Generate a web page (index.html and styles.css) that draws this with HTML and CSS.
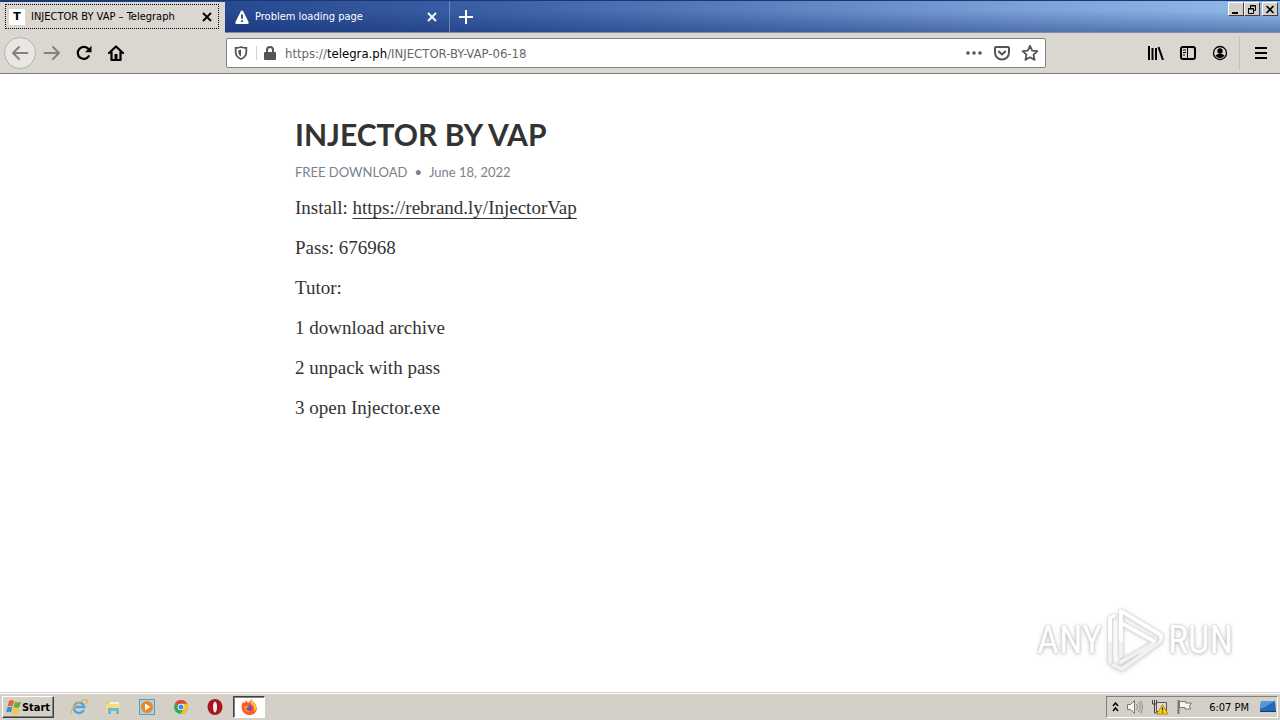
FILE: index.html
```html
<!DOCTYPE html>
<html lang="en">
<head>
    <meta charset="UTF-8">
    <meta name="viewport" content="width=device-width, initial-scale=1.0">
    <title>INJECTOR BY VAP – Telegraph</title>
    <link rel="stylesheet" href="styles.css">
</head>
<body>
    <header class="tab-strip">
        <div class="tab active">
            <div class="tab-focus">
                <span class="favicon">T</span>
                <span class="tab-label">INJECTOR BY VAP – Telegraph</span>
                <button class="tab-close" aria-label="Close tab">
                    <svg width="10" height="10" viewBox="0 0 10 10"><path d="M1 1l8 8M9 1L1 9" stroke="currentColor" stroke-width="1.8"/></svg>
                </button>
            </div>
        </div>
        <div class="tab">
            <svg class="warning" width="14" height="14" viewBox="0 0 14 14"><path d="M7 0.5Q7.7.5 8.1 1.2L13.6 12Q14 14 12.6 14H1.4Q0 14 .4 12L5.9 1.2Q6.3.5 7 .5z" fill="#fff"/><path d="M7 4.5v4.2M7 10.3v1.8" stroke="#234389" stroke-width="1.8"/></svg>
            <span class="tab-label">Problem loading page</span>
            <button class="tab-close" aria-label="Close tab">
                <svg width="10" height="10" viewBox="0 0 10 10"><path d="M1 1l8 8M9 1L1 9" stroke="currentColor" stroke-width="1.8"/></svg>
            </button>
        </div>
        <button class="new-tab" aria-label="New tab">
            <svg width="14" height="14" viewBox="0 0 14 14"><path d="M7 0v14M0 7h14" stroke="#fff" stroke-width="2"/></svg>
        </button>
        <div class="window-controls">
            <button class="win-button" aria-label="Minimize"><svg width="10" height="9" viewBox="0 0 10 9"><path d="M1 7h6v2H1z"/></svg></button>
            <button class="win-button" aria-label="Restore"><svg width="10" height="9" viewBox="0 0 10 9"><path d="M3.5 3V.5h5v5H7M3 1h6M1.500 3.500h5v5h-5zM1 4h6" fill="none" stroke="#000"/></svg></button>
            <button class="win-button close" aria-label="Close"><svg width="10" height="9" viewBox="0 0 10 9"><path d="M1.500 1l7 7M8.500 1l-7 7" stroke="#000" stroke-width="1.600"/></svg></button>
        </div>
    </header>

    <nav class="toolbar">
        <div class="nav-group">
            <button class="tool back" aria-label="Back"><svg width="18" height="16" viewBox="0 0 18 16"><path d="M16.500 8H2M8 2L2 8l6 6" fill="none" stroke="#85827e" stroke-width="2" stroke-linecap="round" stroke-linejoin="round"/></svg></button>
            <button class="tool" aria-label="Forward"><svg width="18" height="16" viewBox="0 0 18 16"><path d="M1.500 8H16M10 2l6 6-6 6" fill="none" stroke="#85827e" stroke-width="2" stroke-linecap="round" stroke-linejoin="round"/></svg></button>
            <button class="tool" aria-label="Reload"><svg width="16" height="16" viewBox="0 0 16 16"><path d="M12.800 11.200A6 6 0 1 1 12 3.600" fill="none" stroke="#000" stroke-width="2.200" stroke-linecap="round"/><path d="M15.500.8v6.400H9z"/></svg></button>
            <button class="tool" aria-label="Home"><svg width="16" height="16" viewBox="0 0 16 16"><path d="M1 8l7-6.500L15 8M3.500 7v8h9V7" fill="none" stroke="#000" stroke-width="2.200" stroke-linecap="round" stroke-linejoin="round"/><path d="M6.500 9h3v5h-3z"/></svg></button>
        </div>
        <div class="spacer"></div>
        <div class="url-bar">
            <svg class="shield" width="14" height="14" viewBox="0 0 14 14"><path d="M7 1Q4 2 1.700 2v4.500Q2 11 7 13q5-2 5.300-6.500V2Q10 2 7 1z" fill="none" stroke="#555" stroke-width="1.800"/><path d="M7 3.500v7Q4.500 9 4.300 6.500V4.200Q6 4 7 3.500z" fill="#555"/></svg>
            <svg class="lock" width="12" height="14" viewBox="0 0 12 14"><path d="M3 7V4a3 3 0 0 1 6 0v3" fill="none" stroke="#555" stroke-width="2"/><rect y="6" width="12" height="8" rx="1" fill="#555"/></svg>
            <a class="address" href="#">https://<span class="domain">telegra.ph</span>/INJECTOR-BY-VAP-06-18</a>
            <button class="url-action" aria-label="Page actions"><svg width="16" height="16" viewBox="0 0 16 16" fill="#555"><circle cx="2" cy="8" r="1.800"/><circle cx="8" cy="8" r="1.800"/><circle cx="14" cy="8" r="1.800"/></svg></button>
            <button class="url-action" aria-label="Save to Pocket"><svg width="16" height="16" viewBox="0 0 16 16" fill="none" stroke="#555" stroke-width="2" stroke-linecap="round" stroke-linejoin="round"><path d="M2 2h12q1 0 1 1v4.500a7 7 0 0 1-14 0V3q0-1 1-1z"/><path d="M4.800 6.500L8 9.500l3.200-3"/></svg></button>
            <button class="url-action" aria-label="Bookmark"><svg width="18" height="18" viewBox="0 0 18 18"><path d="M9 1.800l2.200 4.800 5.200.6-3.900 3.500 1.100 5.200L9 13.300l-4.600 2.600 1.100-5.200-3.900-3.500 5.200-.6z" fill="none" stroke="#555" stroke-width="1.800" stroke-linejoin="round"/></svg></button>
        </div>
        <div class="spacer"></div>
        <div class="nav-group">
            <button class="tool" aria-label="Library"><svg width="16" height="14" viewBox="0 0 16 14"><path d="M1 0v14M4.500 2v12M8 2v12M10.500 1l4.500 13" stroke="#000" stroke-width="2"/></svg></button>
            <button class="tool" aria-label="Sidebars"><svg width="16" height="14" viewBox="0 0 16 14"><rect x="1" y="1" width="14" height="12" rx="2" fill="none" stroke="#000" stroke-width="2"/><path d="M7.500 1v12M3 4h3M3 6.500h3M3 9h2" stroke="#000"/></svg></button>
            <button class="tool" aria-label="Account"><svg width="16" height="16" viewBox="0 0 16 16"><circle cx="8" cy="8" r="6.500" fill="none" stroke="#000" stroke-width="1.300"/><circle cx="8" cy="6" r="2.700"/><path d="M3.500 10.500Q5 8.700 8 8.700t4.500 1.800Q11 13 8 13t-4.500-2.500z"/></svg></button>
        </div>
        <button class="menu" aria-label="Open menu"><svg width="12" height="12" viewBox="0 0 12 12"><path d="M0 1h12M0 6h12M0 11h12" stroke="#000" stroke-width="2"/></svg></button>
    </nav>

    <main class="page">
        <article class="article">
            <h1>INJECTOR BY VAP</h1>
            <address class="byline">FREE DOWNLOAD<span class="dot">•</span><time datetime="2022-06-18">June 18, 2022</time></address>
            <p>Install: <a href="https://rebrand.ly/InjectorVap">https://rebrand.ly/InjectorVap</a></p>
            <p>Pass: 676968</p>
            <p>Tutor:</p>
            <p>1 download archive</p>
            <p>2 unpack with pass</p>
            <p>3 open Injector.exe</p>
        </article>
        <div class="watermark">
            <span>ANY</span>
            <svg width="58" height="64" viewBox="0 0 58 64" fill="none" stroke-width="4" stroke-linejoin="round" stroke-linecap="round">
                <path d="M4 32v22M15 32v16M7 57l9 4 39-28M15 54l31-18" stroke="#f1f1f1"/>
                <path d="M8 8L4 10v22M15 32V3l40 24v3M17 16l31 17" stroke="#fff"/>
            </svg>
            <span>RUN</span>
        </div>
    </main>

    <footer class="taskbar">
        <button class="start">
            <svg width="16" height="16" viewBox="0 0 16 16"><path d="M3 2q3-2 5 0L6.500 7.500Q4 6 1.500 7.500z" fill="#e9622b"/><path d="M9 2.500q3 2 6 0L13.500 8q-3 2-6 0z" fill="#69ae36"/><path d="M1.300 8.500q3-1.500 5 0L5 13.500q-2.500-1.500-5 0z" fill="#388bd5"/><path d="M7.300 9q3 2 6 0L12 14.500q-3 2-6 0z" fill="#f9c532"/></svg>
            Start
        </button>
        <div class="quick-launch">
            <button class="app" aria-label="Internet Explorer"><svg width="18" height="18" viewBox="0 0 18 18"><path d="M13.800 12A5.200 5.200 0 1 1 14.200 9H5" fill="none" stroke="#49a8e0" stroke-width="2.400"/><path d="M2 16Q-.5 13 6 7t11-5q1 1-1 4" fill="none" stroke="#e7b83d" stroke-width="1.300"/></svg></button>
            <button class="app" aria-label="Explorer"><svg width="18" height="16" viewBox="0 0 18 16"><path d="M2 2h5l1 2h7v9H2z" fill="#e8c966"/><path d="M5 3h10v5H5z" fill="#e9f5dc"/><path d="M2 5h14v9H2z" fill="#f5dc82"/><path d="M4 15V9h11v6h-3v-3H7v3z" fill="#69b7dd"/></svg></button>
            <button class="app" aria-label="Media Player"><svg width="16" height="16" viewBox="0 0 16 16"><rect x=".5" y=".5" width="15" height="15" fill="#a9d2ef" stroke="#5b9bca"/><circle cx="8" cy="8" r="6" fill="#f08519"/><path d="M6 4.500v7L11.500 8z" fill="#fff"/></svg></button>
            <button class="app" aria-label="Chrome"><svg width="14" height="14" viewBox="0 0 14 14"><circle cx="7" cy="7" r="7" fill="#35a853"/><path d="M7 7L1 3.300A7 7 0 0 1 13.100 3.700H7z" fill="#ea4335"/><path d="M7 7V3.700h6.100A7 7 0 0 1 6.500 14L10 8.500z" fill="#fbc116"/><circle cx="7" cy="7" r="3.300" fill="#fff"/><circle cx="7" cy="7" r="2.500" fill="#4285f4"/></svg></button>
            <button class="app" aria-label="Opera"><svg width="16" height="16" viewBox="0 0 16 16"><ellipse cx="8" cy="8" rx="7.500" ry="8" fill="#a8161b"/><ellipse cx="8" cy="8" rx="2" ry="5.500" fill="#eee"/></svg></button>
            <button class="app running" aria-label="Firefox"><svg width="16" height="16" viewBox="0 0 16 16"><path d="M2 3l1.500 1L5 1.500Q6 4 8 3.500 9 2 10.500 0 11 2.500 14 4.500q4 6-.5 10Q8 18 3 14-1.500 9.500 2 3z" fill="#ff5a2a"/><path d="M10.500 0q.5 3 3.500 5 3 5-1 8 1-6-3-8-1-2 .5-5z" fill="#ffc52d"/><circle cx="8" cy="9" r="3" fill="#7548c5"/><path d="M2.500 7q3-1 6 .5L5.500 9q0 3 4 3-5 3-7-5z" fill="#ff9526"/></svg></button>
        </div>
        <div class="tray">
            <svg width="7" height="10" viewBox="0 0 7 10"><path d="M1 4l2.500-3L6 4M1 9l2.500-3L6 9" fill="none" stroke="#000" stroke-width="1.500"/></svg>
            <svg width="18" height="16" viewBox="0 0 18 16"><path d="M1.500 5.500h3L8.500 1.500v13l-4-4h-3z" fill="#f4f4f4" stroke="#777"/><path d="M10.500 5q2 3 0 6M12.500 3q3.500 5 0 10M14.500 1.500q4 6.500 0 13" fill="none" stroke="#888"/></svg>
            <svg width="18" height="16" viewBox="0 0 18 16"><path d="M5.500 3.500h10v9h-10z" fill="#ddd" stroke="#555"/><path d="M1.500 1v4h4V1M3.500 1v13h4" fill="none" stroke="#444"/><path d="M11.500 5.500L17 15H6z" fill="#ffd51c" stroke="#bd8900"/><path d="M11.500 8.500v3M11.500 12.500v1.200" stroke="#222" stroke-width="1.300"/></svg>
            <svg width="18" height="16" viewBox="0 0 18 16"><path d="M2.500 1v14" stroke="#777" stroke-width="2"/><path d="M3.500 2.500h6v1.500h6l-2 3 1 3H9V8.500H3.500z" fill="#f5f5f5" stroke="#777"/></svg>
            <span class="clock">6:07 PM</span>
            <svg width="16" height="14" viewBox="0 0 16 14"><path d="M1 1h14l1 10H0z" fill="#2268bd"/><path d="M1 1h14L3 8H0z" fill="#5499dc"/><path d="M0 11h16v1H0z" fill="#183c6b"/></svg>
        </div>
    </footer>
</body>
</html>
```

FILE: styles.css
```css
* {
    box-sizing: border-box;
}
body {
    margin: 0;
    min-height: 100vh;
    display: flex;
    flex-direction: column;
    background: #fff;
    font-family: "DejaVu Sans Condensed", "DejaVu Sans", sans-serif;
    font-size: 11px;
    color: #000;
}
button {
    display: flex;
    align-items: center;
    justify-content: center;
    padding: 0;
    border: none;
    background: none;
    font: inherit;
    color: inherit;
}
svg {
    flex: none;
}

/* Tabs */
.tab-strip {
    display: flex;
    height: 33px;
    background: linear-gradient(rgba(10, 36, 106, 0) 30%, rgba(10, 36, 106, 0.4)), linear-gradient(90deg, #17357d, #3d62a8 40%, #7ba1d8 80%, #92bbe8);
    border-top: 1px solid #183777;
    border-bottom: 1px solid #7e8da8;
}
.tab {
    display: flex;
    align-items: center;
    width: 225px;
    padding: 0 11px 0 10px;
    color: #fff;
    border-right: 1px solid #6d86b7;
}
.tab.active {
    height: 32px;
    margin-top: 1px;
    padding: 2px 6px 5px 5px;
    background: #dad6d0;
    border: none;
    color: #000;
}
.tab-focus {
    display: flex;
    align-items: center;
    width: 100%;
    height: 100%;
    padding: 0 5px 0 3px;
    border: 1px dotted #000;
}
.favicon {
    width: 16px;
    height: 16px;
    background: #fff;
    font: bold 11px/16px "DejaVu Sans", sans-serif;
    text-align: center;
}
.tab-label {
    flex: 1;
    padding-left: 6px;
    white-space: nowrap;
}
.tab-close {
    width: 12px;
    height: 16px;
}
.new-tab {
    width: 32px;
}
.window-controls {
    display: flex;
    align-items: flex-start;
    margin-left: auto;
    padding: 1px 2px 0 0;
}
.win-button {
    width: 16px;
    height: 14px;
    background: #d4d0c8;
    border: 1px solid;
    border-color: #fff #404040 #404040 #fff;
}
.win-button.close {
    margin-left: 2px;
}

/* Toolbar */
.toolbar {
    display: flex;
    align-items: center;
    height: 41px;
    padding: 0 3px 0 4px;
    background: #dad6d0;
    border-bottom: 1px solid #7c7a77;
}
.nav-group {
    display: flex;
}
.tool {
    width: 32px;
    height: 32px;
}
.back {
    border: 1px solid #b5b2ad;
    border-radius: 50%;
    background: #e9e7e3;
}
.spacer {
    flex: 0 1 94px;
}
.url-bar {
    flex: 1;
    display: flex;
    align-items: center;
    height: 30px;
    padding: 0 1px 0 7px;
    background: #fff;
    border: 1px solid #85827d;
    border-radius: 2px;
}
.lock {
    margin-left: 16px;
}
.shield {
    box-shadow: 8px 0 0 #fff, 9px 0 0 #d0d0d0;
}
.address {
    flex: 1;
    padding-left: 9px;
    font-size: 13px;
    color: #666;
    text-decoration: none;
}
.domain {
    color: #000;
}
.url-action {
    width: 28px;
    height: 28px;
}
.menu {
    width: 38px;
    height: 34px;
    margin-left: 3px;
    padding-left: 5px;
    border-left: 1px solid #c4c0ba;
}

/* Article */
.page {
    flex: 1;
    position: relative;
}
.article {
    max-width: 732px;
    margin: 0 auto;
    padding: 40px 21px;
    font-family: "Liberation Serif", serif;
    font-size: 19px;
    line-height: 28px;
    color: #333;
}
.article h1 {
    margin: 0;
    font: bold 30px/40px Lato, sans-serif;
}
.byline {
    margin: 6px 0 10px;
    font: 13px/24px Lato, sans-serif;
    color: #79828b;
}
.dot {
    margin: 0 7px;
}
.article p {
    margin: 0 0 12px;
}
.article a {
    color: inherit;
    text-decoration: underline;
    text-decoration-thickness: 1px;
    text-underline-offset: 4px;
}

/* Logo laid over the lower right corner of the page */
.watermark {
    position: absolute;
    right: 47px;
    bottom: 20px;
    display: flex;
    align-items: center;
    gap: 4px;
    color: #fff;
    font: 38px/64px "Liberation Sans Narrow", "Roboto Condensed", Roboto, sans-serif;
    text-shadow: 0 0 2px #bbb, 0 1px 4px #bbb;
}
.watermark svg {
    filter: drop-shadow(0 0 1px #bbb) drop-shadow(0 1px 2px #ddd);
}

/* Taskbar */
.taskbar {
    display: flex;
    align-items: center;
    height: 28px;
    padding: 1px 2px 0;
    background: #d4d0c8;
    border-top: 1px solid #d4d0c8;
    box-shadow: inset 0 1px 0 #fff;
}
.start {
    width: 52px;
    height: 22px;
    border: 1px solid;
    border-color: #fff #404040 #404040 #fff;
    box-shadow: inset -1px -1px 0 #808080;
    font-weight: bold;
}
.quick-launch {
    display: flex;
    gap: 2px;
    margin-left: 9px;
}
.app {
    width: 32px;
    height: 22px;
}
.app.running {
    background: #fff;
    border: 1px solid;
    border-color: #404040 #fff #fff #404040;
    box-shadow: inset 1px 1px 0 #808080;
}
.tray {
    display: flex;
    align-items: center;
    gap: 7px;
    height: 22px;
    margin-left: auto;
    padding: 0 1px 0 5px;
    border: 1px solid;
    border-color: #808080 #fff #fff #808080;
}
.clock {
    margin: 0 4px 0 8px;
}
```
